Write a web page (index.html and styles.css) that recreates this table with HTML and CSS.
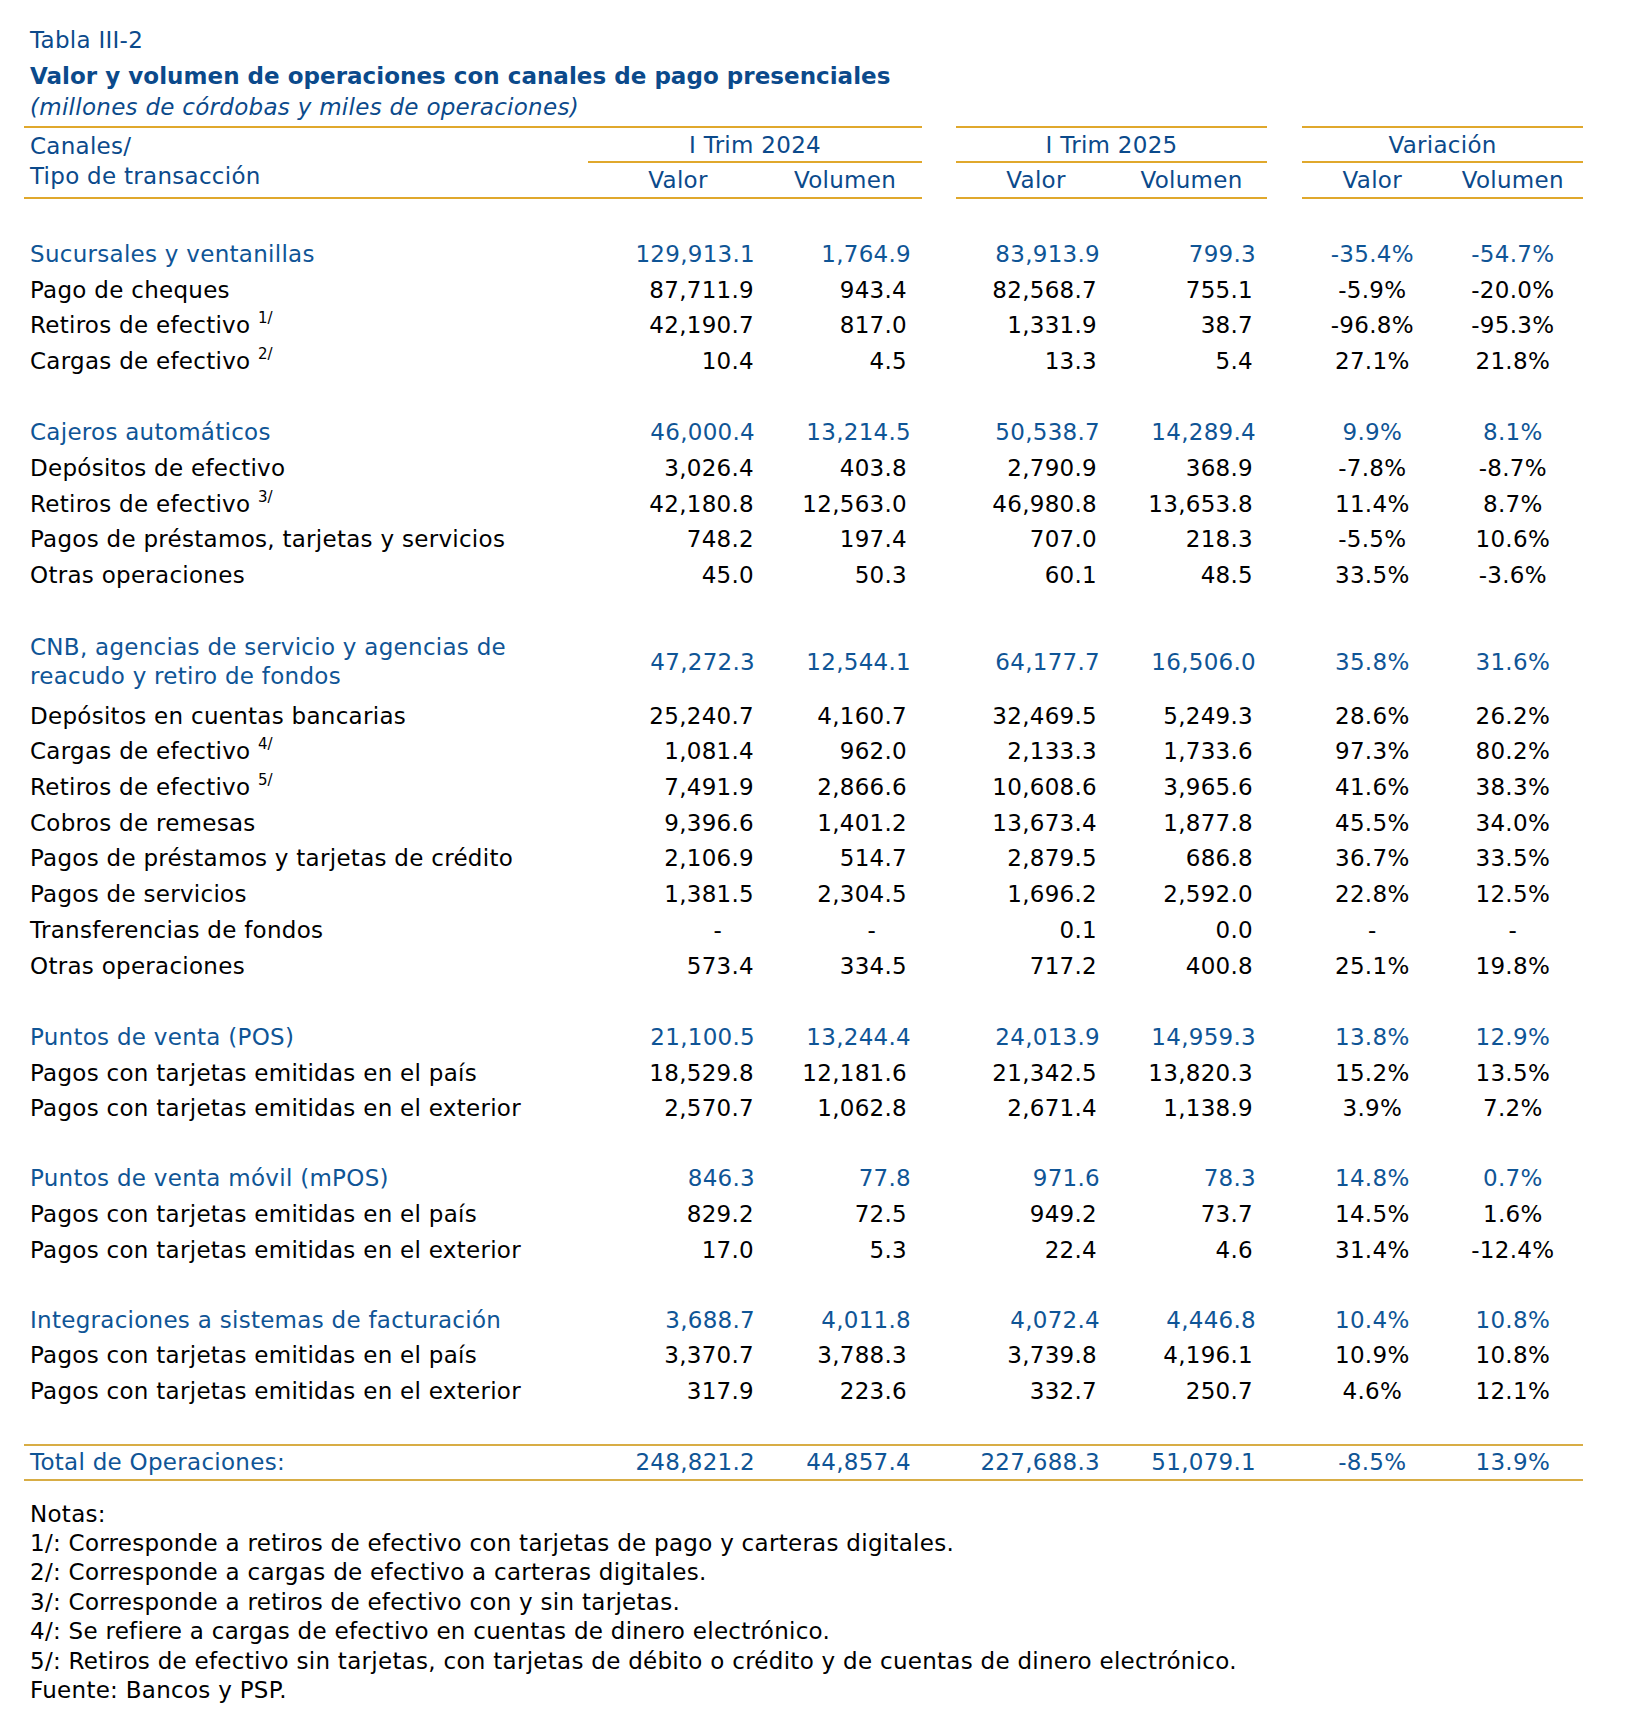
FILE: index.html
```html
<!DOCTYPE html>
<html lang="es">
<head>
<meta charset="utf-8">
<title>Tabla III-2</title>
<link rel="stylesheet" href="styles.css">
</head>
<body>
<div class="page">
  <div class="caption">
    <div class="t-num">Tabla III-2</div>
    <div class="t-title">Valor y volumen de operaciones con canales de pago presenciales</div>
    <div class="t-sub">(millones de córdobas y miles de operaciones)</div>
  </div>
  <table class="data">
    <colgroup>
      <col class="w-lab"><col class="w-c1"><col class="w-c2"><col class="w-gap1">
      <col class="w-c3"><col class="w-c4"><col class="w-gap2"><col class="w-c5"><col class="w-c6">
    </colgroup>
    <thead>
      <tr class="h1">
        <th class="lab" rowspan="2">Canales/<br>Tipo de transacción</th>
        <th class="grp" colspan="2">I Trim 2024</th>
        <th class="gap"></th>
        <th class="grp" colspan="2">I Trim 2025</th>
        <th class="gap"></th>
        <th class="grp" colspan="2">Variación</th>
      </tr>
      <tr class="h2">
        <th class="sub">Valor</th><th class="sub">Volumen</th><th class="gap"></th>
        <th class="sub">Valor</th><th class="sub">Volumen</th><th class="gap"></th>
        <th class="sub">Valor</th><th class="sub">Volumen</th>
      </tr>
    </thead>
    <tbody>
      <tr class="sp sp-top"><td colspan="9"></td></tr>
      <tr class="r sec"><td class="lab">Sucursales y ventanillas</td><td class="c1">129,913.1</td><td class="c2">1,764.9</td><td></td><td class="c3">83,913.9</td><td class="c4">799.3</td><td></td><td class="c5">-35.4%</td><td class="c6">-54.7%</td></tr>
      <tr class="r"><td class="lab">Pago de cheques</td><td class="c1">87,711.9</td><td class="c2">943.4</td><td></td><td class="c3">82,568.7</td><td class="c4">755.1</td><td></td><td class="c5">-5.9%</td><td class="c6">-20.0%</td></tr>
      <tr class="r"><td class="lab">Retiros de efectivo <sup class="fn">1/</sup></td><td class="c1">42,190.7</td><td class="c2">817.0</td><td></td><td class="c3">1,331.9</td><td class="c4">38.7</td><td></td><td class="c5">-96.8%</td><td class="c6">-95.3%</td></tr>
      <tr class="r"><td class="lab">Cargas de efectivo <sup class="fn">2/</sup></td><td class="c1">10.4</td><td class="c2">4.5</td><td></td><td class="c3">13.3</td><td class="c4">5.4</td><td></td><td class="c5">27.1%</td><td class="c6">21.8%</td></tr>

      <tr class="sp"><td colspan="9"></td></tr>
      <tr class="r sec"><td class="lab">Cajeros automáticos</td><td class="c1">46,000.4</td><td class="c2">13,214.5</td><td></td><td class="c3">50,538.7</td><td class="c4">14,289.4</td><td></td><td class="c5">9.9%</td><td class="c6">8.1%</td></tr>
      <tr class="r"><td class="lab">Depósitos de efectivo</td><td class="c1">3,026.4</td><td class="c2">403.8</td><td></td><td class="c3">2,790.9</td><td class="c4">368.9</td><td></td><td class="c5">-7.8%</td><td class="c6">-8.7%</td></tr>
      <tr class="r"><td class="lab">Retiros de efectivo <sup class="fn">3/</sup></td><td class="c1">42,180.8</td><td class="c2">12,563.0</td><td></td><td class="c3">46,980.8</td><td class="c4">13,653.8</td><td></td><td class="c5">11.4%</td><td class="c6">8.7%</td></tr>
      <tr class="r"><td class="lab">Pagos de préstamos, tarjetas y servicios</td><td class="c1">748.2</td><td class="c2">197.4</td><td></td><td class="c3">707.0</td><td class="c4">218.3</td><td></td><td class="c5">-5.5%</td><td class="c6">10.6%</td></tr>
      <tr class="r"><td class="lab">Otras operaciones</td><td class="c1">45.0</td><td class="c2">50.3</td><td></td><td class="c3">60.1</td><td class="c4">48.5</td><td></td><td class="c5">33.5%</td><td class="c6">-3.6%</td></tr>

      <tr class="sp sp-cnb"><td colspan="9"></td></tr>
      <tr class="r2 sec"><td class="lab two">CNB, agencias de servicio y agencias de<br>reacudo y retiro de fondos</td><td class="c1">47,272.3</td><td class="c2">12,544.1</td><td></td><td class="c3">64,177.7</td><td class="c4">16,506.0</td><td></td><td class="c5">35.8%</td><td class="c6">31.6%</td></tr>
      <tr class="r"><td class="lab">Depósitos en cuentas bancarias</td><td class="c1">25,240.7</td><td class="c2">4,160.7</td><td></td><td class="c3">32,469.5</td><td class="c4">5,249.3</td><td></td><td class="c5">28.6%</td><td class="c6">26.2%</td></tr>
      <tr class="r"><td class="lab">Cargas de efectivo <sup class="fn">4/</sup></td><td class="c1">1,081.4</td><td class="c2">962.0</td><td></td><td class="c3">2,133.3</td><td class="c4">1,733.6</td><td></td><td class="c5">97.3%</td><td class="c6">80.2%</td></tr>
      <tr class="r"><td class="lab">Retiros de efectivo <sup class="fn">5/</sup></td><td class="c1">7,491.9</td><td class="c2">2,866.6</td><td></td><td class="c3">10,608.6</td><td class="c4">3,965.6</td><td></td><td class="c5">41.6%</td><td class="c6">38.3%</td></tr>
      <tr class="r"><td class="lab">Cobros de remesas</td><td class="c1">9,396.6</td><td class="c2">1,401.2</td><td></td><td class="c3">13,673.4</td><td class="c4">1,877.8</td><td></td><td class="c5">45.5%</td><td class="c6">34.0%</td></tr>
      <tr class="r"><td class="lab">Pagos de préstamos y tarjetas de crédito</td><td class="c1">2,106.9</td><td class="c2">514.7</td><td></td><td class="c3">2,879.5</td><td class="c4">686.8</td><td></td><td class="c5">36.7%</td><td class="c6">33.5%</td></tr>
      <tr class="r"><td class="lab">Pagos de servicios</td><td class="c1">1,381.5</td><td class="c2">2,304.5</td><td></td><td class="c3">1,696.2</td><td class="c4">2,592.0</td><td></td><td class="c5">22.8%</td><td class="c6">12.5%</td></tr>
      <tr class="r"><td class="lab">Transferencias de fondos</td><td class="c1 dash">-</td><td class="c2 dash">-</td><td></td><td class="c3">0.1</td><td class="c4">0.0</td><td></td><td class="c5">-</td><td class="c6">-</td></tr>
      <tr class="r"><td class="lab">Otras operaciones</td><td class="c1">573.4</td><td class="c2">334.5</td><td></td><td class="c3">717.2</td><td class="c4">400.8</td><td></td><td class="c5">25.1%</td><td class="c6">19.8%</td></tr>

      <tr class="sp"><td colspan="9"></td></tr>
      <tr class="r sec"><td class="lab">Puntos de venta (POS)</td><td class="c1">21,100.5</td><td class="c2">13,244.4</td><td></td><td class="c3">24,013.9</td><td class="c4">14,959.3</td><td></td><td class="c5">13.8%</td><td class="c6">12.9%</td></tr>
      <tr class="r"><td class="lab">Pagos con tarjetas emitidas en el país</td><td class="c1">18,529.8</td><td class="c2">12,181.6</td><td></td><td class="c3">21,342.5</td><td class="c4">13,820.3</td><td></td><td class="c5">15.2%</td><td class="c6">13.5%</td></tr>
      <tr class="r"><td class="lab">Pagos con tarjetas emitidas en el exterior</td><td class="c1">2,570.7</td><td class="c2">1,062.8</td><td></td><td class="c3">2,671.4</td><td class="c4">1,138.9</td><td></td><td class="c5">3.9%</td><td class="c6">7.2%</td></tr>

      <tr class="sp sp-m"><td colspan="9"></td></tr>
      <tr class="r sec"><td class="lab">Puntos de venta móvil (mPOS)</td><td class="c1">846.3</td><td class="c2">77.8</td><td></td><td class="c3">971.6</td><td class="c4">78.3</td><td></td><td class="c5">14.8%</td><td class="c6">0.7%</td></tr>
      <tr class="r"><td class="lab">Pagos con tarjetas emitidas en el país</td><td class="c1">829.2</td><td class="c2">72.5</td><td></td><td class="c3">949.2</td><td class="c4">73.7</td><td></td><td class="c5">14.5%</td><td class="c6">1.6%</td></tr>
      <tr class="r"><td class="lab">Pagos con tarjetas emitidas en el exterior</td><td class="c1">17.0</td><td class="c2">5.3</td><td></td><td class="c3">22.4</td><td class="c4">4.6</td><td></td><td class="c5">31.4%</td><td class="c6">-12.4%</td></tr>

      <tr class="sp sp-i"><td colspan="9"></td></tr>
      <tr class="r sec"><td class="lab">Integraciones a sistemas de facturación</td><td class="c1">3,688.7</td><td class="c2">4,011.8</td><td></td><td class="c3">4,072.4</td><td class="c4">4,446.8</td><td></td><td class="c5">10.4%</td><td class="c6">10.8%</td></tr>
      <tr class="r"><td class="lab">Pagos con tarjetas emitidas en el país</td><td class="c1">3,370.7</td><td class="c2">3,788.3</td><td></td><td class="c3">3,739.8</td><td class="c4">4,196.1</td><td></td><td class="c5">10.9%</td><td class="c6">10.8%</td></tr>
      <tr class="r"><td class="lab">Pagos con tarjetas emitidas en el exterior</td><td class="c1">317.9</td><td class="c2">223.6</td><td></td><td class="c3">332.7</td><td class="c4">250.7</td><td></td><td class="c5">4.6%</td><td class="c6">12.1%</td></tr>

      <tr class="sp sp-t"><td colspan="9"></td></tr>
      <tr class="tot sec"><td class="lab">Total de Operaciones:</td><td class="c1">248,821.2</td><td class="c2">44,857.4</td><td></td><td class="c3">227,688.3</td><td class="c4">51,079.1</td><td></td><td class="c5">-8.5%</td><td class="c6">13.9%</td></tr>
    </tbody>
  </table>
  <div class="notes">
    <div>Notas:</div>
    <div>1/: Corresponde a retiros de efectivo con tarjetas de pago y carteras digitales.</div>
    <div>2/: Corresponde a cargas de efectivo a carteras digitales.</div>
    <div>3/: Corresponde a retiros de efectivo con y sin tarjetas.</div>
    <div>4/: Se refiere a cargas de efectivo en cuentas de dinero electrónico.</div>
    <div>5/: Retiros de efectivo sin tarjetas, con tarjetas de débito o crédito y de cuentas de dinero electrónico.</div>
    <div>Fuente: Bancos y PSP.</div>
  </div>
</div>
</body>
</html>
```
FILE: styles.css
```css
html, body {
  margin: 0;
  padding: 0;
  background: #ffffff;
}
body {
  font-family: "DejaVu Sans", Verdana, sans-serif;
  font-size: 23px;
  letter-spacing: 0.28px;
  color: #000000;
}
.page {
  padding: 25px 0 0 24px;
  width: 1559px;
}
.caption {
  padding-left: 6px;
  color: #0b4a8b;
}
.t-num {
  line-height: 30px;
  height: 30px;
}
.t-title {
  margin-top: 6px;
  line-height: 30px;
  font-weight: bold;
  letter-spacing: 0.03px;
}
.t-sub {
  margin-top: 1px;
  line-height: 30px;
  font-style: italic;
}

.data {
  margin-top: 4px;
  border-collapse: separate;
  border-spacing: 0;
  table-layout: fixed;
  width: 1559px;
}
.w-lab { width: 564px; }
.w-c1 { width: 180px; }
.w-c2 { width: 154px; }
.w-gap1 { width: 34px; }
.w-c3 { width: 160px; }
.w-c4 { width: 151px; }
.w-gap2 { width: 35px; }
.w-c5 { width: 140.5px; }
.w-c6 { width: 140.5px; }

.data th, .data td {
  padding: 0;
  white-space: nowrap;
  vertical-align: middle;
}
.data th {
  font-weight: normal;
  color: #0b4a8b;
  text-align: center;
  line-height: 30px;
}
.h1 { height: 37px; }
.h2 { height: 36px; }
.data th.lab {
  text-align: left;
  padding: 0 0 3px 6px;
  border-top: 2px solid #e0a82c;
  border-bottom: 2px solid #e0a82c;
}
.data th.grp {
  border-top: 2px solid #e0a82c;
  border-bottom: 2px solid #e0a82c;
}
.data th.sub {
  border-bottom: 2px solid #e0a82c;
}

.data td {
  line-height: 28px;
}
.data td.lab {
  text-align: left;
  padding-left: 6px;
}
.data td.two {
  line-height: 29px;
}
.r { height: 35.7px; }
.r2 { height: 72px; }
.sp { height: 35.7px; }
.sp-top { height: 37px; }
.sp-cnb { height: 33px; }
.sp-m { height: 34.5px; }
.sp-i { height: 34.2px; }
.sp-t { height: 34.7px; }

.c1, .c2, .c3, .c4 { text-align: right; }
.c1 { padding-right: 14px !important; }
.c2 { padding-right: 15px !important; }
.c3 { padding-right: 19px !important; }
.c4 { padding-right: 14px !important; }
.c5, .c6 { text-align: center; }

.sec td { color: #0f5596; }
.sec .c1 { padding-right: 13px !important; }
.sec .c2 { padding-right: 11px !important; }
.sec .c3 { padding-right: 16px !important; }
.sec .c4 { padding-right: 11px !important; }

.data td.dash { padding-right: 46px !important; }

.fn {
  font-size: 15px;
  line-height: 1;
  letter-spacing: 0;
  vertical-align: 10px;
}

.tot { height: 37px; }
.tot td {
  border-top: 2px solid #d8ad45;
  border-bottom: 2px solid #d8ad45;
}

.notes {
  margin-top: 19px;
  padding-left: 6px;
  line-height: 29.4px;
}
```
